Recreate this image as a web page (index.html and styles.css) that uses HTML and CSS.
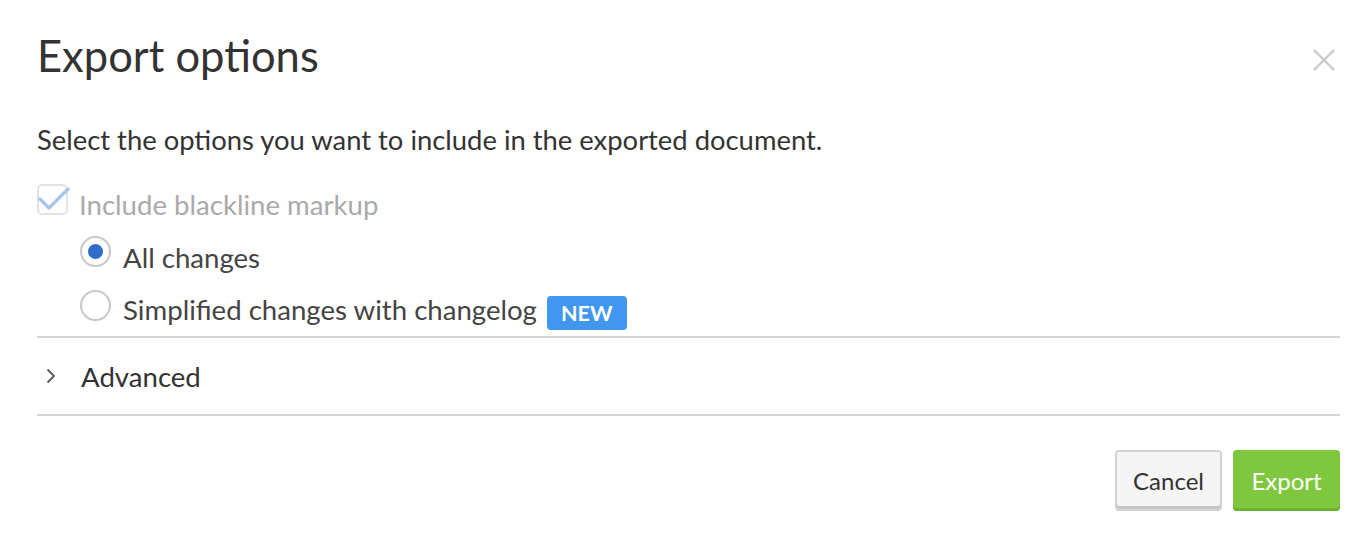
FILE: index.html
```html
<!DOCTYPE html>
<html lang="en">
<head>
  <meta charset="UTF-8">
  <meta name="viewport" content="width=device-width, initial-scale=1.0">
  <title>Export options</title>
  <link rel="stylesheet" href="styles.css">
</head>
<body>
  <div class="dialog">
    <div class="dialog-header">
      <h1 class="dialog-title">Export options</h1>
      <button class="close-btn" aria-label="Close">
        <svg width="24" height="24" viewBox="0 0 24 24"><path d="M2 2 L22 22 M22 2 L2 22" stroke="#c9c9c9" stroke-width="2.4" fill="none"/></svg>
      </button>
    </div>

    <p class="intro">Select the options you want to include in the exported document.</p>

    <div class="options">
      <label class="option option-disabled">
        <span class="checkbox">
          <svg width="34" height="26" viewBox="0 0 34 26"><path d="M3 13 L12 22 L31 3" stroke="#a9c6ec" stroke-width="3.4" fill="none" stroke-linecap="round" stroke-linejoin="round"/></svg>
        </span>
        <span class="option-text">Include blackline markup</span>
      </label>
      <label class="option option-sub">
        <span class="radio radio-on"></span>
        <span class="option-text">All changes</span>
      </label>
      <label class="option option-sub">
        <span class="radio"></span>
        <span class="option-text">Simplified changes with changelog <span class="badge">NEW</span></span>
      </label>
    </div>

    <div class="advanced">
      <svg class="chevron" width="10" height="16" viewBox="0 0 10 16"><path d="M1.5 1.5 L8 8 L1.5 14.5" stroke="#555" stroke-width="1.8" fill="none"/></svg>
      Advanced
    </div>

    <div class="actions">
      <button class="btn btn-cancel">Cancel</button>
      <button class="btn btn-export">Export</button>
    </div>
  </div>
</body>
</html>
```

FILE: styles.css
```css
body {
  margin: 0;
  background: #fff;
  font-family: Lato, "Liberation Sans", sans-serif;
  color: #333;
}
.dialog {
  padding: 25px 32px 0 37px;
}
.dialog-header {
  display: flex;
  justify-content: space-between;
  align-items: flex-start;
}
.dialog-title {
  margin: 0;
  font-size: 43.5px;
  font-weight: 400;
  line-height: 60px;
  color: #333;
}
.close-btn {
  background: none;
  border: 0;
  padding: 0;
  margin: 23px 4px 0 0;
  cursor: pointer;
  line-height: 0;
}
.intro {
  margin: 35px 0 0;
  font-size: 27.4px;
  line-height: 40px;
}
.options {
  margin-top: 10px;
  padding-bottom: 4px;
  border-bottom: 2px solid #d6d6d6;
}
.option {
  display: flex;
  align-items: center;
  height: 54px;
  font-size: 27.6px;
  color: #444;
}
.option-text {
  padding-top: 12px;
}
.option-disabled {
  color: #aaa;
}
.option-disabled .option-text {
  padding-top: 14px;
}
.option-sub {
  padding-left: 43px;
}
.checkbox {
  position: relative;
  width: 27px;
  height: 27px;
  border: 2px solid #e3e3e3;
  border-radius: 5px;
  margin: 4px 11px 0 0;
  flex: none;
}
.checkbox svg {
  position: absolute;
  left: -2px;
  top: 0;
}
.radio {
  width: 27px;
  height: 27px;
  border: 2px solid #c8c8c8;
  border-radius: 50%;
  margin-right: 12px;
  flex: none;
  display: flex;
  align-items: center;
  justify-content: center;
}
.radio-on::after {
  content: "";
  width: 15px;
  height: 15px;
  border-radius: 50%;
  background: #2f6fcc;
}
.badge {
  display: inline-block;
  margin-left: 3px;
  background: #4197f0;
  color: #fff;
  font-size: 21.5px;
  font-weight: 700;
  border-radius: 4px;
  padding: 2px 14px;
  line-height: 30px;
  vertical-align: -1px;
}
.advanced {
  display: flex;
  align-items: center;
  height: 76px;
  font-size: 27.6px;
  color: #333;
  border-bottom: 2px solid #d6d6d6;
}
.chevron {
  margin: 0 25px 0 9px;
}
.actions {
  display: flex;
  justify-content: flex-end;
  gap: 11px;
  margin-top: 34px;
}
.btn {
  font-family: Lato, "Liberation Sans", sans-serif;
  font-size: 24px;
  height: 61px;
  width: 107px;
  padding: 0;
  border-radius: 4px;
  cursor: pointer;
}
.btn-cancel {
  background: #f5f5f5;
  color: #333;
  border: 2px solid #d2d2d2;
  box-shadow: inset 0 -3px 0 #c4c4c4;
}
.btn-export {
  background: #7ec73f;
  color: #fff;
  border: 0;
  box-shadow: inset 0 -3px 0 #6cb033;
}
```
